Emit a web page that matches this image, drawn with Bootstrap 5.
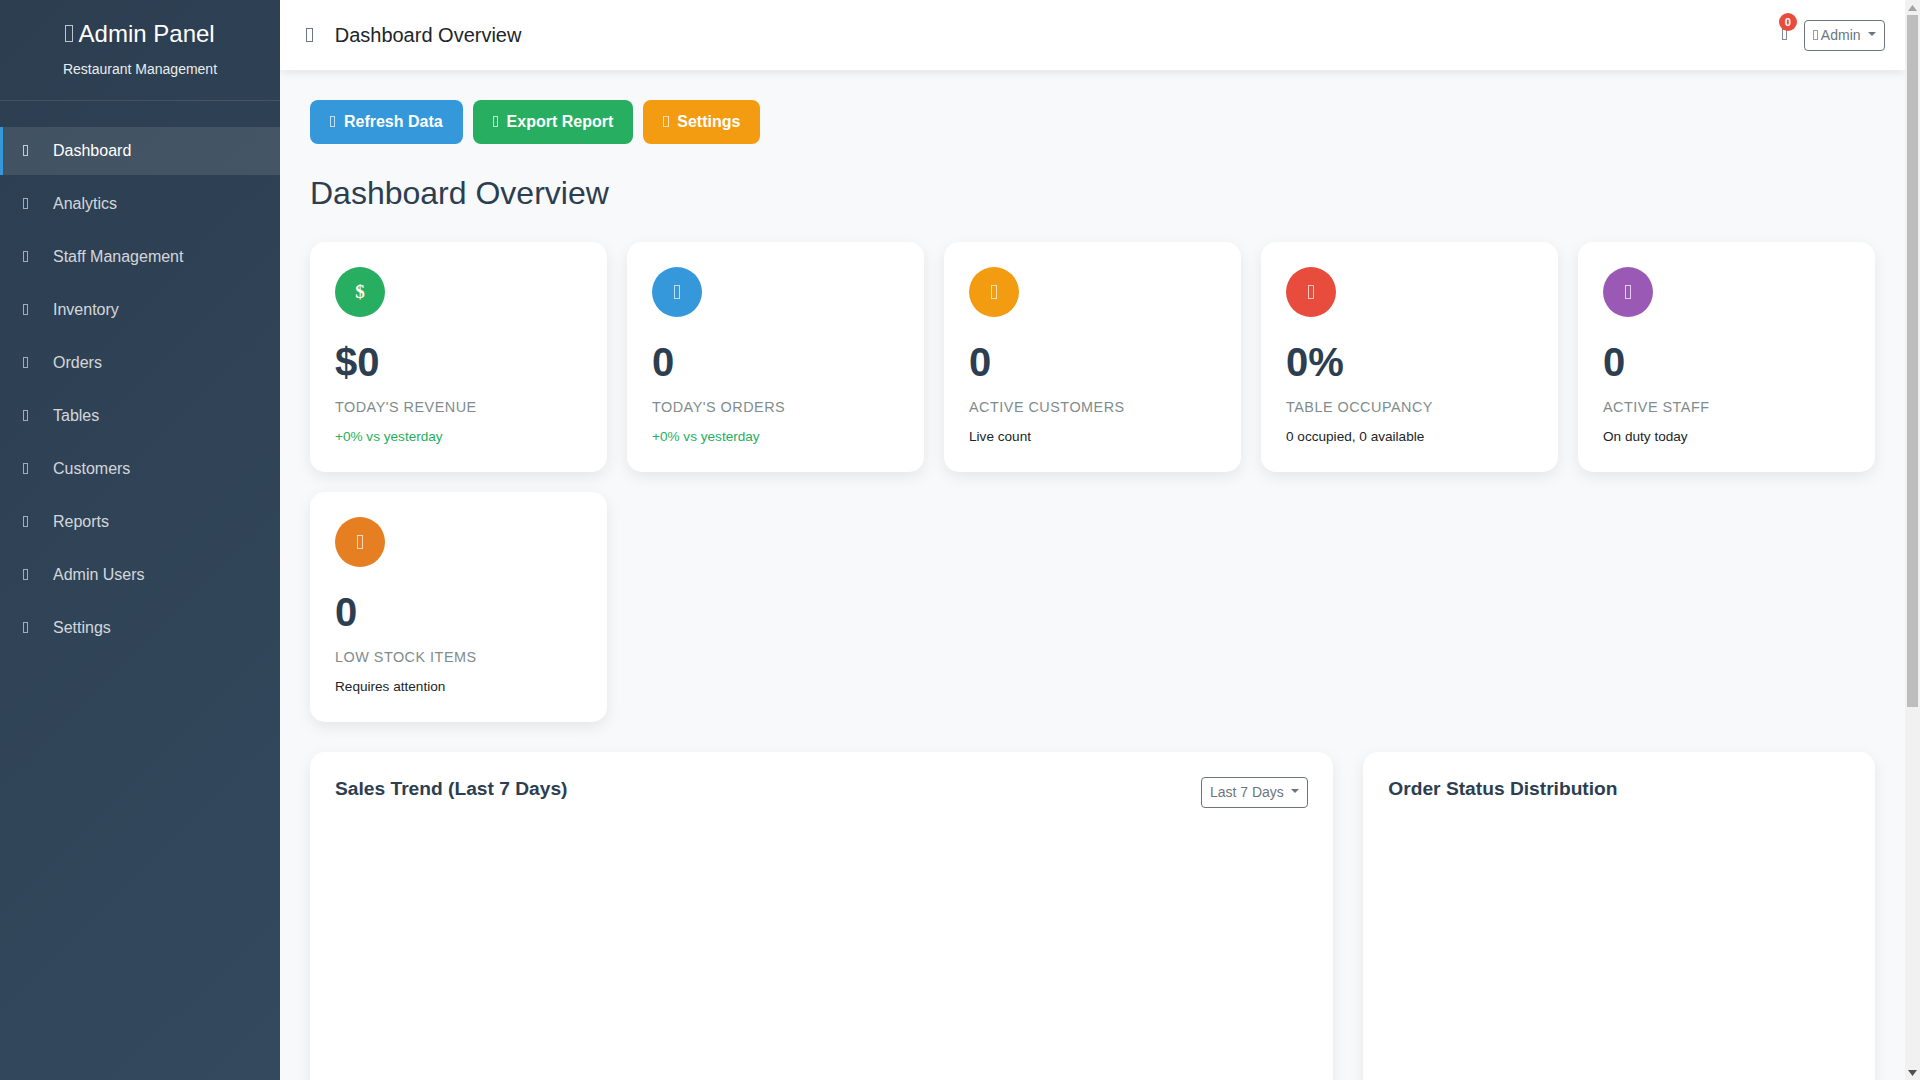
<!DOCTYPE html>
<html lang="en">
<head>
<meta charset="utf-8">
<title>Admin Panel</title>
<link href="https://cdn.jsdelivr.net/npm/bootstrap@5.3.0/dist/css/bootstrap.min.css" rel="stylesheet">
<style>
body{font-family:"Liberation Sans",Arial,sans-serif;background:#f8f9fa;}
.tofu{display:inline-block;width:.33em;height:.69em;border:1px solid currentColor;opacity:.7;}
.side-panel{width:280px;flex:0 0 280px;background:linear-gradient(135deg,#2c3e50,#34495e);color:#fff;}
.side-head{padding:20px 20px 20.5px;text-align:center;border-bottom:1px solid rgba(255,255,255,.1);}
.side-head h3{font-size:24px;line-height:28.8px;margin:0 0 10px;font-weight:500;}
.side-head p{font-size:14px;margin:0;opacity:.9;}
.side-nav{padding:21px 0 20px;}
.side-nav a{display:flex;align-items:baseline;padding:12px 20px;margin:5px 0;color:rgba(255,255,255,.8);text-decoration:none;border-left:3px solid transparent;}
.side-nav a.on{background:rgba(255,255,255,.1);color:#fff;border-left-color:#3498db;}
.side-nav .slot{width:20px;margin-right:10px;}
.top-strip{height:70px;background:#fff;box-shadow:0 2px 10px rgba(0,0,0,.1);padding:0 20px 0 26px;position:relative;}
.top-strip .tog{color:#2c3e50;font-size:20px;width:28.7px;line-height:24px;}
.top-strip h5{font-size:20px;margin:0;font-weight:400;color:#212529;line-height:24px;}
.bell-wrap{color:#495867;margin-right:17px;font-size:16px;line-height:24px;}
.bell-num{position:absolute;top:-10px;left:-3px;width:18px;height:18px;border-radius:50%;background:#e74c3c;color:#fff;font-size:11.2px;font-weight:700;line-height:18px;text-align:center;}
.pane{padding:30px;}
.act-row{gap:10px;}
.act-btn{border:0;border-radius:8px;padding:10px 20px;font-weight:600;color:#fff;font-size:16px;line-height:24px;}
.act-btn .tofu{margin-right:8.7px;}
.act-blue{background:#3498db;}.act-green{background:#27ae60;}.act-amber{background:#f39c12;}
.page-h{font-size:32px;line-height:38.4px;color:#2c3e50;font-weight:500;margin:30px 0 29.6px;}
.stat-grid{display:grid;grid-template-columns:repeat(5,1fr);gap:20px;margin-bottom:30px;}
.stat-box{background:#fff;border-radius:15px;padding:25px;box-shadow:0 5px 15px rgba(0,0,0,.08);}
.stat-dot{width:50px;height:50px;border-radius:50%;color:#fff;font-size:19.2px;margin-bottom:15px;}
.dollar{font-family:"Liberation Serif",serif;font-weight:700;line-height:1;}
.stat-num{font-size:40px;font-weight:700;color:#2c3e50;line-height:60px;margin-bottom:5px;}
.stat-lbl{font-size:14.4px;color:#7f8c8d;text-transform:uppercase;letter-spacing:.5px;line-height:21.6px;margin-bottom:8px;}
.stat-sub{font-size:13.6px;line-height:20.4px;color:#212529;}
.stat-sub.up{color:#27ae60;}
.chart-grid{display:grid;grid-template-columns:2fr 1fr;gap:30px;}
.chart-box{background:#fff;border-radius:15px;padding:25px;box-shadow:0 5px 15px rgba(0,0,0,.08);min-height:460px;}
.chart-box h5{font-size:19.2px;font-weight:700;color:#2c3e50;margin:0;line-height:23px;}
.fake-bar{width:15px;flex:0 0 15px;background:#f1f1f1;}
.fake-end{height:15px;}
.fake-thumb{height:692px;margin:0 2px;background:#bdbdbd;}
</style>
</head>
<body>
<div class="d-flex vh-100 overflow-hidden">
  <aside class="side-panel">
    <div class="side-head">
      <h3><span class="tofu"></span> Admin Panel</h3>
      <p>Restaurant Management</p>
    </div>
    <nav class="side-nav">
      <a class="on" href="#"><span class="slot"><span class="tofu"></span></span>Dashboard</a>
      <a href="#"><span class="slot"><span class="tofu"></span></span>Analytics</a>
      <a href="#"><span class="slot"><span class="tofu"></span></span>Staff Management</a>
      <a href="#"><span class="slot"><span class="tofu"></span></span>Inventory</a>
      <a href="#"><span class="slot"><span class="tofu"></span></span>Orders</a>
      <a href="#"><span class="slot"><span class="tofu"></span></span>Tables</a>
      <a href="#"><span class="slot"><span class="tofu"></span></span>Customers</a>
      <a href="#"><span class="slot"><span class="tofu"></span></span>Reports</a>
      <a href="#"><span class="slot"><span class="tofu"></span></span>Admin Users</a>
      <a href="#"><span class="slot"><span class="tofu"></span></span>Settings</a>
    </nav>
  </aside>
  <main class="flex-grow-1 overflow-hidden" style="min-width:0">
    <header class="top-strip d-flex align-items-center">
      <span class="tog"><span class="tofu"></span></span>
      <h5>Dashboard Overview</h5>
      <div class="ms-auto d-flex align-items-center">
        <span class="bell-wrap position-relative"><span class="tofu"></span><span class="bell-num">0</span></span>
        <button class="btn btn-sm btn-outline-secondary dropdown-toggle" type="button"><span class="tofu"></span> Admin
        </button>
      </div>
    </header>
    <div class="pane">
      <div class="d-flex act-row">
        <button class="act-btn act-blue" type="button"><span class="tofu"></span>Refresh Data</button>
        <button class="act-btn act-green" type="button"><span class="tofu"></span>Export Report</button>
        <button class="act-btn act-amber" type="button"><span class="tofu"></span>Settings</button>
      </div>
      <h2 class="page-h">Dashboard Overview</h2>
      <div class="stat-grid">
        <div class="stat-box"><div class="stat-dot d-flex align-items-center justify-content-center" style="background:#27ae60"><span class="dollar">$</span></div><div class="stat-num">$0</div><div class="stat-lbl">Today's Revenue</div><div class="stat-sub up">+0% vs yesterday</div></div>
        <div class="stat-box"><div class="stat-dot d-flex align-items-center justify-content-center" style="background:#3498db"><span class="tofu"></span></div><div class="stat-num">0</div><div class="stat-lbl">Today's Orders</div><div class="stat-sub up">+0% vs yesterday</div></div>
        <div class="stat-box"><div class="stat-dot d-flex align-items-center justify-content-center" style="background:#f39c12"><span class="tofu"></span></div><div class="stat-num">0</div><div class="stat-lbl">Active Customers</div><div class="stat-sub">Live count</div></div>
        <div class="stat-box"><div class="stat-dot d-flex align-items-center justify-content-center" style="background:#e74c3c"><span class="tofu"></span></div><div class="stat-num">0%</div><div class="stat-lbl">Table Occupancy</div><div class="stat-sub">0 occupied, 0 available</div></div>
        <div class="stat-box"><div class="stat-dot d-flex align-items-center justify-content-center" style="background:#9b59b6"><span class="tofu"></span></div><div class="stat-num">0</div><div class="stat-lbl">Active Staff</div><div class="stat-sub">On duty today</div></div>
        <div class="stat-box"><div class="stat-dot d-flex align-items-center justify-content-center" style="background:#e67e22"><span class="tofu"></span></div><div class="stat-num">0</div><div class="stat-lbl">Low Stock Items</div><div class="stat-sub">Requires attention</div></div>
      </div>
      <div class="chart-grid">
        <section class="chart-box">
          <div class="d-flex justify-content-between align-items-start">
            <h5>Sales Trend (Last 7 Days)</h5>
            <button class="btn btn-sm btn-outline-secondary dropdown-toggle" type="button">Last 7 Days
            </button>
          </div>
        </section>
        <section class="chart-box">
          <h5>Order Status Distribution</h5>
        </section>
      </div>
    </div>
  </main>
  <div class="fake-bar d-flex flex-column" aria-hidden="true">
    <div class="fake-end d-flex align-items-center justify-content-center"><svg width="9" height="6" viewBox="0 0 9 6"><path d="M4.5 0 9 6H0z" fill="#a3a3a3"/></svg></div>
    <div class="fake-thumb"></div>
    <div class="fake-end mt-auto d-flex align-items-center justify-content-center"><svg width="9" height="6" viewBox="0 0 9 6"><path d="M0 0h9L4.5 6z" fill="#505050"/></svg></div>
  </div>
</div>
<script src="https://cdn.jsdelivr.net/npm/bootstrap@5.3.0/dist/js/bootstrap.bundle.min.js"></script>
</body>
</html>
